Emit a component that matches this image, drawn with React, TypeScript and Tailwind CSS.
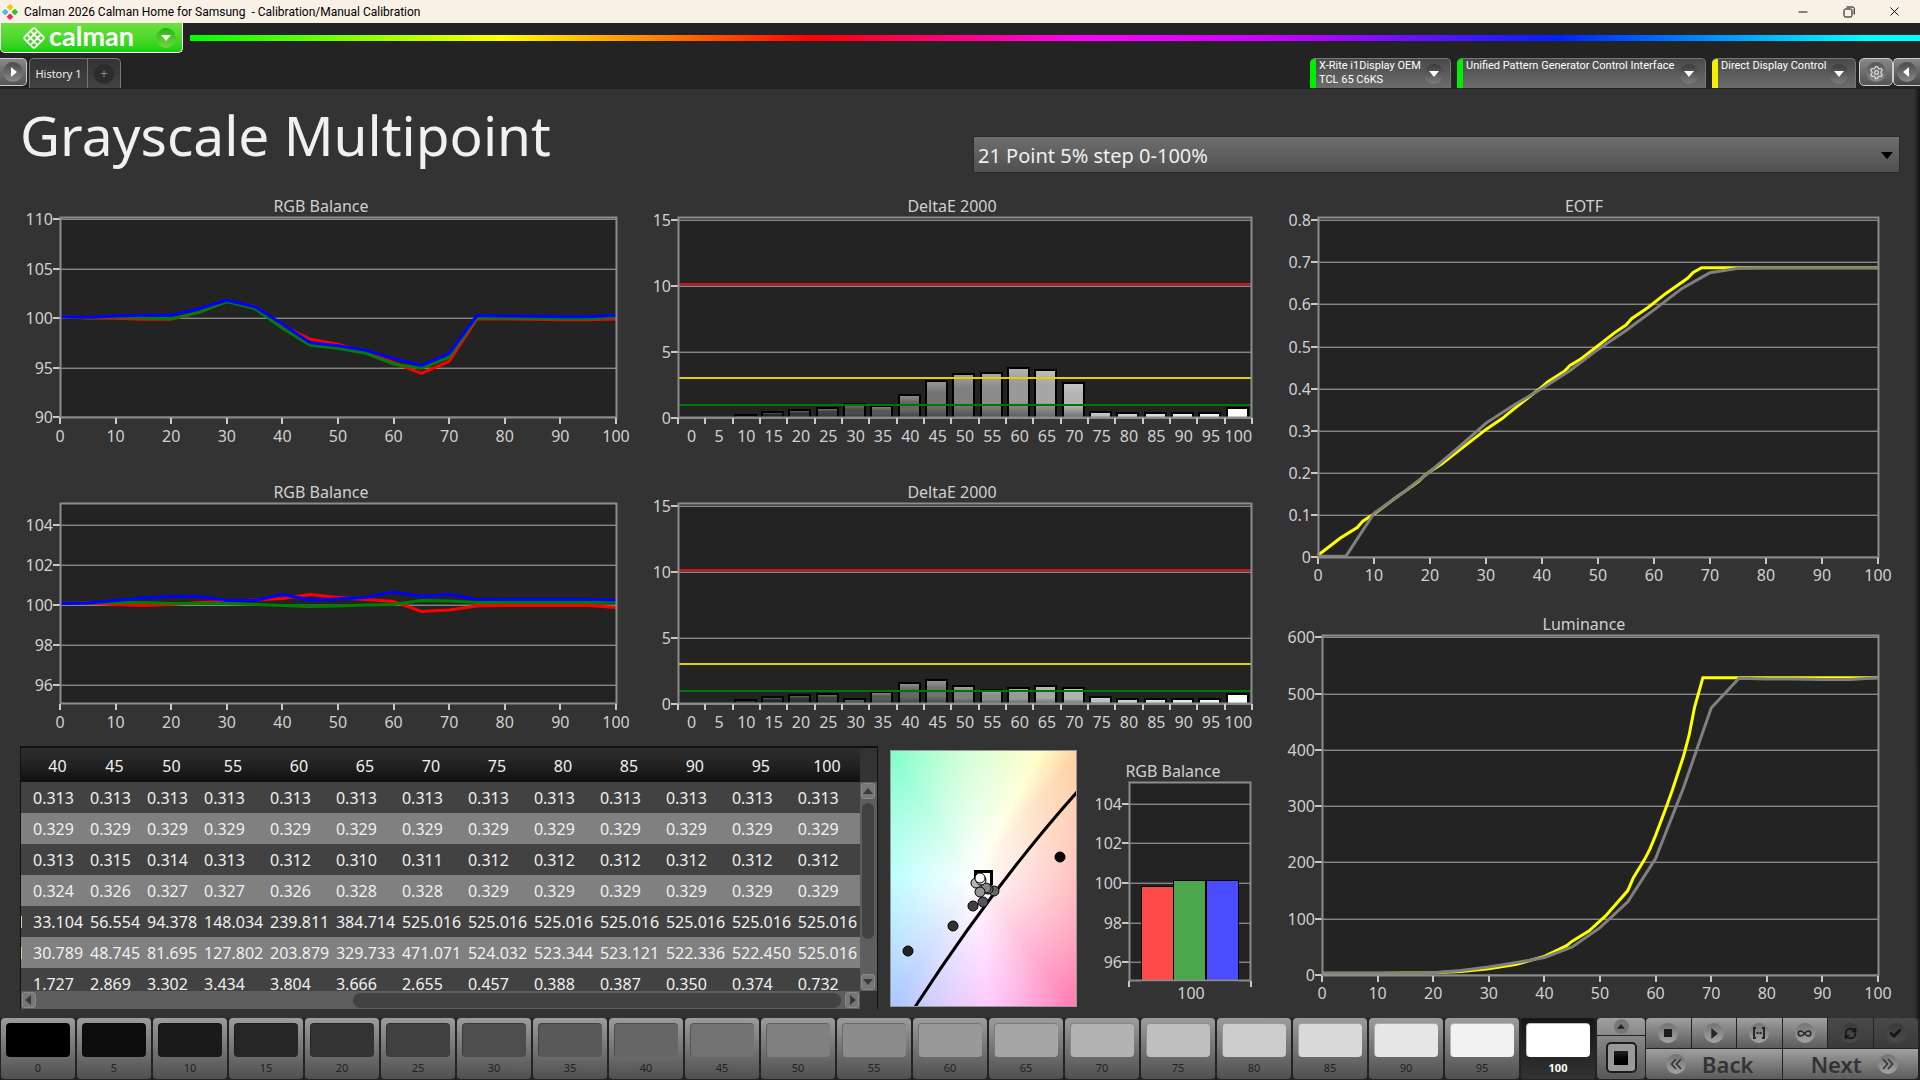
import type { ReactNode } from "react";
import { Check, RefreshCw, Infinity as InfinityIcon, Settings, Minus, X } from "lucide-react";

type Point = [number, number];

const levels = Array.from({ length: 21 }, (_, i) => i * 5);
const tens = Array.from({ length: 11 }, (_, i) => i * 10);

const toPoints = (values: number[], base = 0): Point[] =>
  values.map((v, i) => [i * 5, base + v]);

const balanceBefore = {
  red: toPoints([0.13, 0, -0.03, -0.13, -0.13, 0.57, 1.72, 1.14, -0.74, -2.15, -2.66, -3.47, -4.5, -5.6, -4.38, -0.1, -0.1, -0.13, -0.17, -0.17, -0.1], 100),
  green: toPoints([0.13, 0.03, 0.1, 0, -0.07, 0.57, 1.65, 0.98, -1.04, -2.76, -3.06, -3.57, -4.65, -5.08, -3.97, 0.03, 0, -0.03, -0.07, -0.07, 0.1], 100),
  blue: toPoints([0.13, 0.07, 0.2, 0.27, 0.27, 0.94, 1.78, 1.14, -0.6, -2.5, -2.8, -3.27, -4.1, -4.8, -3.6, 0.24, 0.2, 0.17, 0.13, 0.13, 0.27], 100),
};

const balanceAfter = {
  red: toPoints([0.08, 0.1, 0.02, -0.03, 0.02, 0.13, 0.17, 0.25, 0.33, 0.52, 0.38, 0.27, 0.18, -0.32, -0.25, -0.05, -0.03, -0.03, -0.02, -0.02, -0.13], 100),
  green: toPoints([0.08, 0.1, 0.13, 0.12, 0.08, 0.07, 0.07, 0.02, -0.03, -0.08, -0.05, 0, 0.02, 0.22, 0.2, 0.13, 0.12, 0.12, 0.12, 0.13, 0.15], 100),
  blue: toPoints([0.08, 0.1, 0.22, 0.35, 0.42, 0.43, 0.22, 0.23, 0.52, 0.25, 0.3, 0.38, 0.65, 0.43, 0.52, 0.27, 0.27, 0.27, 0.27, 0.28, 0.25], 100),
};

const deltaBefore = [0, 0, 0.3, 0.5, 0.7, 0.8, 1.13, 0.95, 1.85, 2.87, 3.38, 3.45, 3.84, 3.68, 2.75, 0.5, 0.45, 0.45, 0.45, 0.45, 0.8];
const deltaAfter = [0, 0, 0.35, 0.6, 0.75, 0.83, 0.45, 0.98, 1.65, 1.88, 1.42, 1.15, 1.28, 1.42, 1.28, 0.6, 0.45, 0.45, 0.45, 0.45, 0.83];

const eotfTarget: Point[] = [
  [0, 0.004], [4, 0.045], [7, 0.07], [8, 0.085], [10, 0.102], [14, 0.142], [17, 0.17], [18, 0.18], [19, 0.193], [20, 0.203], [22, 0.22],
  [30, 0.303], [33, 0.33], [34, 0.341], [37, 0.373], [40, 0.404], [41, 0.416], [44, 0.441], [45, 0.455], [47, 0.471], [50, 0.502], [53, 0.533],
  [55, 0.551], [56, 0.566], [59, 0.593], [62, 0.625], [66, 0.662], [67, 0.676], [68.5, 0.687], [100, 0.687],
];
const eotfMeasured = toPoints([0.002, 0.002, 0.104, 0.151, 0.203, 0.259, 0.318, 0.361, 0.4, 0.443, 0.493, 0.538, 0.587, 0.638, 0.675, 0.686, 0.687, 0.687, 0.687, 0.687, 0.687]);

const luminanceTarget: Point[] = [
  [0, 3], [10, 3], [20, 4], [25, 6], [30, 11], [35, 19], [40, 33], [44, 52], [45, 60], [48, 78], [51, 105], [55, 150], [56, 173],
  [58, 205], [59, 224], [60, 248], [62, 300], [63, 328], [65, 388], [66, 425], [67, 475], [68.5, 528], [100, 528],
];
const luminanceMeasured = toPoints([3, 3, 3, 3, 4, 8, 14, 22, 31, 50, 84, 130, 207, 332, 474, 527, 526, 526, 525, 525, 528]);

const tableRows = [
  Array(13).fill("0.313"),
  Array(13).fill("0.329"),
  ["0.313", "0.315", "0.314", "0.313", "0.312", "0.310", "0.311", "0.312", "0.312", "0.312", "0.312", "0.312", "0.312"],
  ["0.324", "0.326", "0.327", "0.327", "0.326", "0.328", "0.328", "0.329", "0.329", "0.329", "0.329", "0.329", "0.329"],
  ["33.104", "56.554", "94.378", "148.034", "239.811", "384.714", ...Array(7).fill("525.016")],
  ["30.789", "48.745", "81.695", "127.802", "203.879", "329.733", "471.071", "524.032", "523.344", "523.121", "522.336", "522.450", "525.016"],
  ["1.727", "2.869", "3.302", "3.434", "3.804", "3.666", "2.655", "0.457", "0.388", "0.387", "0.350", "0.374", "0.732"],
];

const chromaPoints: [number, number, string][] = [
  [169, 106, "#0a0a0a"],
  [17, 200, "#222222"],
  [62, 175, "#333333"],
  [82, 155, "#404040"],
  [92, 151, "#555555"],
  [103, 140, "#666666"],
  [97, 138, "#757575"],
  [95, 137, "#868686"],
  [89, 141, "#949494"],
  [85, 132, "#b4b4b4"],
  [90, 129, "#e8e8e8"],
  [89, 127, "#ffffff"],
];

type Scale = { left: number; right: number; top: number; bottom: number; y: (v: number) => number };

const xAt = (s: Scale, v: number) => s.left + (v / 100) * (s.right - s.left - 1);

type ChartProps = {
  title: string;
  titleX: number;
  titleY: number;
  width: number;
  height: number;
  scale: Scale;
  yTicks: number[];
  xTicks: number[];
  xLabels: { x: number; label: string | number }[];
  labelGap?: number;
  children: ReactNode;
};

function Chart({ title, titleX, titleY, width, height, scale, yTicks, xTicks, xLabels, labelGap = 24, children }: ChartProps) {
  const { left, right, top, bottom, y } = scale;
  return (
    <svg viewBox={`0 0 ${width} ${height}`} className="block w-full" role="img" aria-label={title}>
      <text x={titleX} y={titleY} textAnchor="middle" className="fill-[#d0d0d0] text-[16px]">
        {title}
      </text>
      <rect x={left} y={top} width={right - left} height={bottom - top} fill="#232323" />
      {yTicks.map((v) => (
        <g key={v} shapeRendering="crispEdges">
          <path d={`M${left} ${Math.round(y(v)) - 0.5}H${right}`} stroke="#4c4c4c" />
          <path d={`M${left} ${Math.round(y(v)) + 0.5}H${right}`} stroke="#858585" />
          <path d={`M${left - 7} ${Math.round(y(v))}H${left}`} stroke="#c8c8c8" strokeWidth="2" />
        </g>
      ))}
      {yTicks.map((v) => (
        <text key={v} x={left - 7} y={Math.round(y(v)) + 6} textAnchor="end" className="fill-[#d0d0d0] text-[16px]">
          {v}
        </text>
      ))}
      {children}
      <rect x={left + 0.5} y={top + 0.5} width={right - left - 1} height={bottom - top - 1} fill="none" stroke="#8c8c8c" strokeWidth="2" />
      {xTicks.map((x) => (
        <path key={x} d={`M${Math.round(x)} ${bottom}v6`} stroke="#c8c8c8" strokeWidth="2" shapeRendering="crispEdges" />
      ))}
      {xLabels.map(({ x, label }) => (
        <text key={label} x={x} y={bottom + labelGap} textAnchor="middle" className="fill-[#d0d0d0] text-[16px]">
          {label}
        </text>
      ))}
    </svg>
  );
}

function Line({ scale, points, color }: { scale: Scale; points: Point[]; color: string }) {
  return (
    <polyline
      points={points.map(([x, v]) => `${xAt(scale, x).toFixed(1)},${scale.y(v).toFixed(1)}`).join(" ")}
      fill="none"
      stroke={color}
      strokeWidth="3"
    />
  );
}

type BalanceProps = { data: Record<"red" | "green" | "blue", Point[]>; yTicks: number[]; perUnit: number; mid: number };

function BalanceChart({ data, yTicks, perUnit, mid }: BalanceProps) {
  const scale: Scale = { left: 60, right: 617, top: 27, bottom: 228, y: (v) => mid + (100 - v) * perUnit };
  return (
    <Chart
      title="RGB Balance"
      titleX={321}
      titleY={22}
      width={640}
      height={270}
      scale={scale}
      yTicks={yTicks}
      xTicks={tens.map((v) => xAt(scale, v))}
      xLabels={tens.map((v) => ({ x: xAt(scale, v), label: v }))}
    >
      <Line scale={scale} points={data.red} color="#ff0000" />
      <Line scale={scale} points={data.green} color="#008000" />
      <Line scale={scale} points={data.blue} color="#0000ff" />
    </Chart>
  );
}

function DeltaChart({ values }: { values: number[] }) {
  const scale: Scale = { left: 38, right: 612, top: 27, bottom: 228, y: (v) => 228 - v * 13.2 };
  const step = (scale.right - scale.left) / 21;
  return (
    <Chart
      title="DeltaE 2000"
      titleX={312}
      titleY={22}
      width={640}
      height={270}
      scale={scale}
      yTicks={[0, 5, 10, 15]}
      xTicks={Array.from({ length: 22 }, (_, i) => scale.left + i * step)}
      xLabels={levels.map((v, i) => ({ x: scale.left + (i + 0.5) * step, label: v }))}
    >
      <defs>
        <linearGradient id="barShade" x1="0" y1="0" x2="0" y2="1">
          <stop offset="0" stopColor="#fff" stopOpacity="0.25" />
          <stop offset="0.3" stopColor="#fff" stopOpacity="0" />
          <stop offset="0.65" stopColor="#000" stopOpacity="0" />
          <stop offset="1" stopColor="#000" stopOpacity="0.4" />
        </linearGradient>
      </defs>
      {values.map((v, i) => {
        if (v === 0) return null;
        const x = Math.round(scale.left + i * step + 1);
        const y = Math.round(scale.y(v));
        const c = Math.round((i * 255) / 20);
        return (
          <g key={i}>
            <rect x={x} y={y} width="23" height={228 - y} fill="#000" />
            <rect x={x + 2} y={y + 2} width="19" height={Math.max(226 - y, 0)} fill={`rgb(${c},${c},${c})`} />
            {i < 20 && <rect x={x + 2} y={y + 2} width="19" height={Math.max(226 - y, 0)} fill="url(#barShade)" />}
          </g>
        );
      })}
      <g shapeRendering="crispEdges" strokeWidth="2">
        <path d="M38 94H612" stroke="#d60f0f" />
        <path d="M38 188H612" stroke="#dcd400" />
        <path d="M38 215H612" stroke="#007800" />
      </g>
    </Chart>
  );
}

function EotfChart() {
  const scale: Scale = { left: 38, right: 599, top: 27, bottom: 368, y: (v) => 367 - v * 421 };
  return (
    <Chart
      title="EOTF"
      titleX={304}
      titleY={22}
      width={640}
      height={410}
      scale={scale}
      yTicks={[0, 0.1, 0.2, 0.3, 0.4, 0.5, 0.6, 0.7, 0.8]}
      xTicks={tens.map((v) => xAt(scale, v))}
      xLabels={tens.map((v) => ({ x: xAt(scale, v), label: v }))}
      labelGap={23}
    >
      <Line scale={scale} points={eotfTarget} color="#ffff00" />
      <Line scale={scale} points={eotfMeasured} color="#808080" />
    </Chart>
  );
}

function LuminanceChart() {
  const scale: Scale = { left: 42, right: 599, top: 35, bottom: 376, y: (v) => 375 - v * 0.563 };
  return (
    <Chart
      title="Luminance"
      titleX={304}
      titleY={30}
      width={640}
      height={410}
      scale={scale}
      yTicks={[0, 100, 200, 300, 400, 500, 600]}
      xTicks={tens.map((v) => xAt(scale, v))}
      xLabels={tens.map((v) => ({ x: xAt(scale, v), label: v }))}
      labelGap={23}
    >
      <Line scale={scale} points={luminanceTarget} color="#ffff00" />
      <Line scale={scale} points={luminanceMeasured} color="#808080" />
    </Chart>
  );
}

function BalanceBars() {
  const scale: Scale = { left: 39, right: 161, top: 36, bottom: 235, y: (v) => 137 + (100 - v) * 19.8 };
  const bars = [
    { x: 51, y: 140, color: "#ff4a4a" },
    { x: 83, y: 134, color: "#4ca64c" },
    { x: 116, y: 134, color: "#4c4cff" },
  ];
  return (
    <Chart
      title="RGB Balance"
      titleX={83}
      titleY={31}
      width={190}
      height={270}
      scale={scale}
      yTicks={[96, 98, 100, 102, 104]}
      xTicks={[39, 161]}
      xLabels={[{ x: 101, label: 100 }]}
      labelGap={18}
    >
      {bars.map((b) => (
        <rect key={b.x} x={b.x + 0.5} y={b.y + 0.5} width="32" height={235 - b.y} fill={b.color} stroke="#000" />
      ))}
    </Chart>
  );
}

function ChromaticityPlot() {
  return (
    <div className="w-[187px] shrink-0 self-start border border-[#999] bg-[radial-gradient(farthest-corner_at_45%_50%,#fff_0%,#fff0_95%),conic-gradient(from_0deg_at_45%_50%,#c8ffc8_0deg,#ffffc0_27deg,#ffd2a4_40deg,#ffb0a8_85deg,#ff80b4_142deg,#ffb8ff_174deg,#a4c4ff_213deg,#90ffff_270deg,#78ffc8_326deg,#c8ffc8_360deg)]">
      <svg viewBox="0 0 185 255" className="block w-full" role="img" aria-label="CIE chromaticity">
        <path d="M24 256Q104 133 186 41" fill="none" stroke="#000" strokeWidth="3" />
        <rect x="84.5" y="120.5" width="16" height="19" fill="#fff" stroke="#000" strokeWidth="3" />
        <rect x="82" y="134" width="22" height="9" fill="#fff" fillOpacity="0.9" />
        {chromaPoints.map(([cx, cy, fill]) => (
          <circle key={`${cx}-${cy}`} cx={cx} cy={cy} r="5" fill={fill} stroke="#000" />
        ))}
      </svg>
    </div>
  );
}

function Triangle({ className, dir = "down" }: { className?: string; dir?: "up" | "down" | "left" | "right" }) {
  const shapes = {
    down: "M0 0H10L5 6Z",
    up: "M0 6H10L5 0Z",
    left: "M7 0V10L1 5Z",
    right: "M3 0V10L9 5Z",
  };
  return (
    <svg viewBox={dir === "left" || dir === "right" ? "0 0 10 10" : "0 0 10 6"} className={className} fill="currentColor">
      <path d={shapes[dir]} />
    </svg>
  );
}

function ScrollButton({ dir }: { dir: "up" | "down" | "left" | "right" }) {
  return (
    <button aria-label={`Scroll ${dir}`} className="grid h-4 w-[14px] shrink-0 place-items-center rounded-[3px] border border-[#8a8a8a] bg-[#777] text-[#3a3a3a]">
      <Triangle dir={dir} className="w-[10px]" />
    </button>
  );
}

function ResultsTable() {
  return (
    <div className="h-[263px] min-w-0 flex-1 overflow-hidden border-x border-t-2 border-[#111] bg-[#333]">
      <div className="grid grid-cols-[1fr_17px]">
        <div className="h-[243px] overflow-hidden">
          <table className="w-full table-fixed border-collapse text-[16px] text-[#f0f0f0]">
            <colgroup>
              <col className="w-2" />
              <col className="w-[57px]" />
              <col className="w-[57px]" />
              <col className="w-[57px]" />
              {levels.slice(11).map((v) => (
                <col key={v} />
              ))}
            </colgroup>
            <thead>
              <tr className="h-[34px] bg-linear-to-b from-[#2e2e2e] via-[#222] via-50% to-[#101010]">
                <th></th>
                {levels.slice(8).map((v) => (
                  <th key={v} className="p-0 pt-px text-center leading-[22px] font-normal">{v}</th>
                ))}
              </tr>
            </thead>
            <tbody>
              {tableRows.map((row, r) => (
                <tr key={r} className="h-[31px] odd:bg-[#424242] even:bg-[#808080]">
                  <td className="p-0">{(r === 4 || r === 5) && <span className="block h-3 w-px bg-[#e0c9a0]"></span>}</td>
                  {row.map((cell, i) => (
                    <td key={i} className="p-0 pl-1 leading-[22px] whitespace-nowrap">{cell}</td>
                  ))}
                </tr>
              ))}
            </tbody>
          </table>
        </div>
        <div className="mt-[34px] flex flex-col items-center gap-1 bg-[#5e5e5e] py-px">
          <ScrollButton dir="up" />
          <div className="w-3 flex-5 rounded-full bg-[#424242]"></div>
          <div className="flex-1"></div>
          <ScrollButton dir="down" />
        </div>
      </div>
      <div className="mr-[17px] flex h-[18px] items-center bg-[#5e5e5e] px-px">
        <ScrollButton dir="left" />
        <div className="flex-[39]"></div>
        <div className="mr-1 h-[15px] flex-[60] rounded-full bg-[#424242]"></div>
        <ScrollButton dir="right" />
      </div>
    </div>
  );
}

function RoundArrow({ className }: { className: string }) {
  return (
    <span className={`grid size-5 shrink-0 place-items-center rounded-full text-white ${className}`}>
      <Triangle className="w-[10px]" />
    </span>
  );
}

function DeviceTab({ lines, accent, width }: { lines: string[]; accent: string; width: string }) {
  return (
    <button className={`flex h-[30px] overflow-hidden rounded-t-[5px] border-t border-r border-[#777] bg-linear-to-b from-[#4a4a4a] to-[#6c6c6c] text-left ${width}`}>
      <span className={`w-[6px] shrink-0 self-stretch ${accent}`}></span>
      <span className="min-w-0 flex-1 pl-[3px] font-['Roboto'] text-[11px] leading-[14px] whitespace-nowrap text-white">
        {lines.map((l) => (
          <span key={l} className="block">{l}</span>
        ))}
      </span>
      <RoundArrow className="mt-[5px] mr-[6px] bg-linear-to-b from-[#3c3c3c] to-[#7c7c7c]" />
    </button>
  );
}

function LogoMark() {
  return (
    <svg viewBox="0 0 24 24" className="h-6 w-6" fill="none" stroke="#fff">
      <g transform="rotate(45 12 12)" strokeWidth="1.8">
        <rect x="4.5" y="4.5" width="15" height="15" rx="2" />
        <path d="M9.5 4.5v15M14.5 4.5v15M4.5 9.5h15M4.5 14.5h15" />
      </g>
    </svg>
  );
}

function Header() {
  return (
    <header>
      <div className="flex h-[23px] items-center bg-[#f9f1e6] text-black">
        <svg viewBox="0 0 16 16" className="ml-[2px] size-4">
          <rect x="5.6" y="0.8" width="4.8" height="4.8" rx="1" transform="rotate(45 8 3.2)" fill="#fdc400" />
          <rect x="0.8" y="5.6" width="4.8" height="4.8" rx="1" transform="rotate(45 3.2 8)" fill="#41c0f0" />
          <rect x="10.4" y="5.6" width="4.8" height="4.8" rx="1" transform="rotate(45 12.8 8)" fill="#28c828" />
          <rect x="5.6" y="10.4" width="4.8" height="4.8" rx="1" transform="rotate(45 8 12.8)" fill="#ff2060" />
        </svg>
        <span className="ml-[6px] font-['Roboto'] text-[12px] whitespace-pre">Calman 2026 Calman Home for Samsung  - Calibration/Manual Calibration</span>
        <div className="ml-auto flex pr-[3px]">
          <button aria-label="Minimize" className="grid h-[23px] w-[46px] place-items-center">
            <Minus size={14} strokeWidth={1.6} />
          </button>
          <button aria-label="Restore" className="grid h-[23px] w-[45px] place-items-center">
            <svg viewBox="0 0 12 12" className="size-3" fill="none" stroke="currentColor">
              <rect x="1" y="3" width="8" height="8" rx="1.5" />
              <path d="M3.5 1H9.5Q11.2 1 11.2 2.7V8.5" />
            </svg>
          </button>
          <button aria-label="Close" className="grid h-[23px] w-[46px] place-items-center">
            <X size={15} strokeWidth={1.5} />
          </button>
        </div>
      </div>
      <div className="flex h-[30px] items-start">
        <button className="flex h-[30px] w-[183px] items-center rounded-b-[5px] border border-t-0 border-white bg-linear-to-b from-[#6ee040] to-[#0cd00c] pl-[21px]">
          <LogoMark />
          <span className="ml-[3px] pb-[3px] font-['Lato'] text-[27px] leading-[26px] font-bold text-white">calman</span>
          <RoundArrow className="mr-[6px] ml-auto bg-linear-to-b from-[#12b812] to-[#6ed83c]" />
        </button>
        <div className="mt-3 ml-[7px] h-[6px] flex-1 bg-[linear-gradient(to_right,#00ff00_0%,#ffff00_18%,#ff0000_36%,#ff00ff_52%,#c800ff_63%,#0020ff_79%,#00ffff_97%)]"></div>
      </div>
      <div className="flex h-9 items-start pt-[5px]">
        <button aria-label="Open workflow" className="grid h-7 w-[27px] place-items-center rounded-r-[5px] border border-l-0 border-[#ccc] bg-linear-to-b from-[#888] to-[#555] text-white">
          <span className="grid size-5 place-items-center rounded-full bg-linear-to-b from-[#4a4a4a] to-[#8a8a8a]">
            <Triangle dir="right" className="w-[10px]" />
          </span>
        </button>
        <nav className="ml-[2px] flex h-[30px] rounded-t-[5px] border border-b-0 border-[#777] bg-linear-to-b from-[#333] to-[#424242] text-[11px]">
          <button className="w-[58px] border-r border-[#777] pt-px text-center whitespace-nowrap text-[#eee]">History 1</button>
          <button aria-label="Add history" className="grid w-8 place-items-center text-[#888]">
            <span className="grid size-5 place-items-center rounded-full bg-[#2c2c2c] text-[13px] leading-none">+</span>
          </button>
        </nav>
        <div className="ml-auto flex gap-[6px]">
          <DeviceTab lines={["X-Rite i1Display OEM", "TCL 65 C6KS"]} accent="bg-[#00f000]" width="w-[141px]" />
          <DeviceTab lines={["Unified Pattern Generator Control Interface"]} accent="bg-[#00f000]" width="w-[249px]" />
          <DeviceTab lines={["Direct Display Control"]} accent="bg-[#f4f000]" width="w-[144px]" />
        </div>
        <button aria-label="Settings" className="ml-[3px] grid h-7 w-[34px] place-items-center rounded-[5px] border border-[#ccc] bg-linear-to-b from-[#888] to-[#555]">
          <span className="grid size-5 place-items-center rounded-full bg-linear-to-b from-[#555] to-[#8a8a8a] text-[#ddd]">
            <Settings size={15} />
          </span>
        </button>
        <button aria-label="Collapse" className="grid h-7 w-[27px] place-items-center rounded-l-[5px] border border-r-0 border-[#ccc] bg-linear-to-b from-[#888] to-[#444] text-white">
          <span className="grid size-5 place-items-center rounded-full bg-linear-to-b from-[#4a4a4a] to-[#8a8a8a]">
            <Triangle dir="left" className="w-[10px]" />
          </span>
        </button>
      </div>
    </header>
  );
}

function TransportButton({ label, disabled, children }: { label: string; disabled?: boolean; children: ReactNode }) {
  return (
    <button
      aria-label={label}
      disabled={disabled}
      className="group grid place-items-center bg-linear-to-b from-[#a0a0a0] to-[#5c5c5c] text-[#262626] disabled:from-[#4a4a4a] disabled:to-[#3a3a3a] disabled:text-[#161616]"
    >
      <span className="grid size-5 place-items-center rounded-full bg-linear-to-b from-[#727272] to-[#a4a4a4] group-disabled:from-[#3a3a3a] group-disabled:to-[#4c4c4c]">
        {children}
      </span>
    </button>
  );
}

function Footer() {
  return (
    <footer className="flex h-[62px] gap-px bg-[#232323]">
      <div className="grid flex-1 grid-cols-21 gap-x-[2px] px-px">
        {levels.map((v, i) => {
          const c = Math.round((i * 255) / 20);
          return (
            <button
              key={v}
              aria-pressed={v === 100}
              className="flex h-[61px] flex-col items-center rounded-[4px] bg-linear-to-b from-[#9c9c9c] to-[#505050] px-[5px] pt-[5px] text-[11px] leading-[22px] text-[#222] aria-pressed:from-[#161616] aria-pressed:to-[#333] aria-pressed:font-bold aria-pressed:text-white"
            >
              <span
                className="h-9 w-full rounded-[4px] border-t border-l border-black/25"
                style={{ backgroundColor: `rgb(${c},${c},${c})` }}
              ></span>
              {v}
            </button>
          );
        })}
      </div>
      <div className="flex h-[61px] w-[48px] flex-col gap-px">
        <button aria-label="Expand" className="grid h-[17px] place-items-center rounded-t-[4px] bg-linear-to-b from-[#a0a0a0] to-[#888] text-[#222]">
          <span className="grid size-[15px] place-items-center rounded-full bg-[#777]">
            <Triangle dir="up" className="w-2" />
          </span>
        </button>
        <button aria-label="Window pattern" className="grid flex-1 place-items-center rounded-b-[4px] bg-linear-to-b from-[#888] to-[#585858]">
          <span className="grid size-[31px] place-items-center rounded-[5px] border-2 border-[#1c1c1c] bg-[#999]">
            <span className="size-[14px] bg-linear-to-b from-[#222] to-black"></span>
          </span>
        </button>
      </div>
      <div className="mr-[2px] grid h-[61px] w-[272px] grid-cols-6 grid-rows-2 gap-px overflow-hidden rounded-[4px]">
        <TransportButton label="Stop"><span className="size-2 bg-[#1c1c1c]"></span></TransportButton>
        <TransportButton label="Play"><Triangle dir="right" className="w-[11px]" /></TransportButton>
        <TransportButton label="Read series">
          <svg viewBox="0 0 14 12" className="w-[14px]" fill="none" stroke="currentColor" strokeWidth="2">
            <path d="M4 1H2v10h2M10 1h2v10h-2" />
            <path d="M4.500 6h5" strokeDasharray="2 1" />
          </svg>
        </TransportButton>
        <TransportButton label="Continuous"><InfinityIcon size={15} strokeWidth={2.5} /></TransportButton>
        <TransportButton label="Refresh" disabled><RefreshCw size={13} strokeWidth={3.5} /></TransportButton>
        <TransportButton label="Accept" disabled><Check size={13} strokeWidth={5} /></TransportButton>
        <button className="col-span-3 flex items-center justify-center gap-4 bg-linear-to-b from-[#a0a0a0] to-[#5c5c5c] pr-2 text-[22px] leading-none font-semibold text-[#333]">
          <span className="grid size-5 place-items-center rounded-full bg-linear-to-b from-[#727272] to-[#a4a4a4]">
            <svg viewBox="0 0 12 12" className="size-3" fill="none" stroke="currentColor" strokeWidth="1.6"><path d="M6 1 1.5 6 6 11M11 1 6.5 6l4.500 5" /></svg>
          </span>
          Back
        </button>
        <button className="col-span-3 flex items-center justify-center gap-4 bg-linear-to-b from-[#a0a0a0] to-[#5c5c5c] pl-2 text-[22px] leading-none font-semibold text-[#333]">
          Next
          <span className="grid size-5 place-items-center rounded-full bg-linear-to-b from-[#727272] to-[#a4a4a4]">
            <svg viewBox="0 0 12 12" className="size-3" fill="none" stroke="currentColor" strokeWidth="1.6"><path d="M1 1 5.500 6 1 11M6 1l4.500 5L6 11" /></svg>
          </span>
        </button>
      </div>
    </footer>
  );
}

export default function App() {
  return (
    <div className="flex min-h-screen flex-col bg-[#232323] font-['Noto_Sans','Open_Sans',sans-serif]">
      <Header />
      <main className="flex-1 bg-[linear-gradient(to_left,#141414,#333_6px)]">
        <div className="flex h-[101px] justify-between pr-[20px] pl-5">
          <h1 className="pt-[6px] text-[55px] leading-[80px] whitespace-nowrap text-[#f0f0f0]">Grayscale Multipoint</h1>
          <div className="relative mt-[47px] h-[37px] w-[927px]">
            <select
              aria-label="Point layout"
              className="h-full w-full appearance-none border border-[#2a2a2a] bg-linear-to-b from-[#6e6e6e] to-[#505050] pt-[2px] pl-1 text-[20px] text-[#f0f0f0]"
            >
              <option>21 Point 5% step 0-100%</option>
            </select>
            <Triangle className="pointer-events-none absolute top-4 right-[7px] w-3 text-black" />
          </div>
        </div>
        <div className="flex">
          <div className="w-2/3">
            <div className="grid grid-cols-2 gap-y-4">
              <BalanceChart data={balanceBefore} yTicks={[90, 95, 100, 105, 110]} perUnit={9.9} mid={128} />
              <DeltaChart values={deltaBefore} />
              <BalanceChart data={balanceAfter} yTicks={[96, 98, 100, 102, 104]} perUnit={20} mid={129} />
              <DeltaChart values={deltaAfter} />
            </div>
            <div className="flex pl-5">
              <ResultsTable />
              <div className="w-3 shrink-0"></div>
              <div className="flex shrink-0 pt-1">
                <ChromaticityPlot />
              </div>
              <div className="ml-[13px] w-[190px] shrink-0">
                <BalanceBars />
              </div>
            </div>
          </div>
          <div className="w-1/3">
            <EotfChart />
            <LuminanceChart />
          </div>
        </div>
      </main>
      <Footer />
    </div>
  );
}
